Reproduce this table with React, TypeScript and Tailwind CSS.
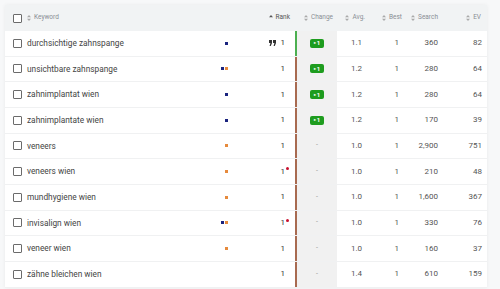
import React from "react";

type Row = {
  keyword: string;
  features: ("b" | "o")[];
  quote?: boolean;
  dot?: boolean;
  change?: number;
  avg: string;
  best: number;
  search: string;
  ev: number;
};

const rows: Row[] = [
  { keyword: "durchsichtige zahnspange", features: ["b"], quote: true, change: 1, avg: "1.1", best: 1, search: "360", ev: 82 },
  { keyword: "unsichtbare zahnspange", features: ["b", "o"], change: 1, avg: "1.2", best: 1, search: "280", ev: 64 },
  { keyword: "zahnimplantat wien", features: ["b"], change: 1, avg: "1.2", best: 1, search: "280", ev: 64 },
  { keyword: "zahnimplantate wien", features: ["b"], change: 1, avg: "1.2", best: 1, search: "170", ev: 39 },
  { keyword: "veneers", features: ["o"], avg: "1.0", best: 1, search: "2,900", ev: 751 },
  { keyword: "veneers wien", features: ["o"], dot: true, avg: "1.0", best: 1, search: "210", ev: 48 },
  { keyword: "mundhygiene wien", features: ["o"], avg: "1.0", best: 1, search: "1,600", ev: 367 },
  { keyword: "invisalign wien", features: ["b", "o"], dot: true, avg: "1.0", best: 1, search: "330", ev: 76 },
  { keyword: "veneer wien", features: ["o"], avg: "1.0", best: 1, search: "160", ev: 37 },
  { keyword: "zähne bleichen wien", features: [], avg: "1.4", best: 1, search: "610", ev: 159 },
];

const SortIcon = ({ active }: { active?: boolean }) => (
  <svg width="4" height="6" viewBox="0 0 4 6" className="mr-[3px]">
    <path d="M2 0 L4 2.2 L0 2.2 Z" fill={active ? "#555" : "#aaa"} />
    {!active && <path d="M2 6 L4 3.8 L0 3.8 Z" fill="#aaa" />}
  </svg>
);

const Checkbox = () => (
  <span className="block w-[9px] h-[9px] border border-[#6b6b6b] rounded-[1px] bg-white" />
);

const QuoteIcon = () => (
  <svg width="7" height="6" viewBox="0 0 7 6" className="mr-[5px]">
    <path d="M0 0 H3 V3 L1.8 6 H0.6 L1.4 3 H0 Z" fill="#333" />
    <path d="M4 0 H7 V3 L5.8 6 H4.6 L5.4 3 H4 Z" fill="#333" />
  </svg>
);

const Head = ({ label, className, active }: { label: string; className: string; active?: boolean }) => (
  <div className={`flex items-center justify-end ${className}`}>
    <SortIcon active={active} />
    <span>{label}</span>
  </div>
);

export default function App() {
  return (
    <div
      className="w-[500px] h-[289px] overflow-hidden bg-[#f7f8f9] pl-[5px] pt-[5px]"
      style={{ fontFamily: "Roboto, 'Liberation Sans', sans-serif" }}
    >
      <div className="w-[482px] bg-white shadow-[0_0_4px_rgba(0,0,0,0.06)]">
        <div className="flex h-[26px] items-center bg-[#f1f3f4] text-[6.5px] text-[#8a8f94]">
          <div className="w-[22px] pl-[8px]">
            <Checkbox />
          </div>
          <div className="w-[206px] flex items-center">
            <SortIcon />
            <span>Keyword</span>
          </div>
          <Head label="Rank" active className="w-[62px] pr-[5px] text-[#555]" />
          <div className="w-[2px]" />
          <Head label="Change" className="w-[40px] pr-[4px]" />
          <Head label="Avg." className="w-[28px]" />
          <Head label="Best" className="w-[37px]" />
          <Head label="Search" className="w-[38px] pr-[2px]" />
          <Head label="EV" className="w-[47px] pr-[6px]" />
        </div>
        {rows.map((r, i) => (
          <div
            key={r.keyword}
            className="flex h-[25.67px] items-center border-b border-[#f0f1f2] text-[8px] text-[#555]"
          >
            <div className="w-[22px] pl-[8px]">
              <Checkbox />
            </div>
            <div className="w-[178px] text-[#444] text-[8.3px]">{r.keyword}</div>
            <div className="w-[28px] flex items-center justify-end pr-[5px] gap-[1px]">
              {r.features.map((f, j) => (
                <span
                  key={j}
                  className={`block w-[3px] h-[3px] ${f === "b" ? "bg-[#1a237e]" : "bg-[#e68a3c]"}`}
                />
              ))}
            </div>
            <div className="w-[62px] h-full flex items-center justify-end pr-[10px] relative text-[#333]">
              {r.quote && <QuoteIcon />}
              <span>1</span>
              {r.dot && (
                <span className="absolute right-[6px] top-[8px] w-[3px] h-[3px] rounded-full bg-[#c8102e]" />
              )}
            </div>
            <div className={`w-[2px] h-full ${i === 0 ? "bg-[#4caf50]" : "bg-[#a86a50]"}`} />
            <div className="w-[40px] h-full bg-[#f1f1f1] flex items-center justify-center">
              {r.change ? (
                <span className="flex items-center justify-center w-[14px] h-[9px] rounded-[2px] bg-[#1e9c1e] text-white text-[6px] font-bold leading-none">
                  <span className="text-[4px] mr-[1px]">▸</span>
                  {r.change}
                </span>
              ) : (
                <span className="text-[#999] text-[7px] leading-none">-</span>
              )}
            </div>
            <div className="w-[28px] text-right pr-[3px]">{r.avg}</div>
            <div className="w-[37px] text-right pr-[3px]">{r.best}</div>
            <div className="w-[38px] text-right pr-[2px]">{r.search}</div>
            <div className="w-[47px] text-right pr-[5px]">{r.ev}</div>
          </div>
        ))}
      </div>
    </div>
  );
}
